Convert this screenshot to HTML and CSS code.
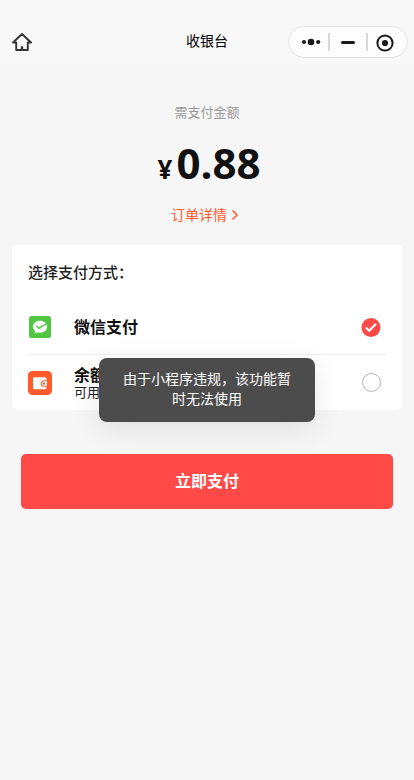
FILE: index.html
```html
<!DOCTYPE html>
<html lang="zh-CN">
<head>
<meta charset="utf-8">
<title>收银台</title>
<link rel="stylesheet" href="styles.css">
</head>
<body>
<header class="navbar">
  <svg class="home" width="20" height="18" viewBox="0 0 20 18"><path d="M1 9.500 10 1l9 8.500h-3.200V17H4.200V9.500Z" fill="none" stroke="#333" stroke-width="1.900" stroke-linejoin="round"/><path d="M10 13.300v3.400" stroke="#333" stroke-width="2.400"/></svg>
  <h1 class="nav-title">收银台</h1>
  <div class="capsule">
    <svg class="dots" width="20" height="8" viewBox="0 0 20 8" fill="#1a1a1a"><circle cx="3" cy="4" r="2.100"/><circle cx="10" cy="4" r="3.300"/><circle cx="17.200" cy="4" r="2.100"/></svg>
    <i class="sep"></i>
    <i class="minus"></i>
    <i class="sep"></i>
    <svg class="target" width="18" height="18" viewBox="0 0 18 18"><circle cx="9" cy="9" r="7.600" fill="none" stroke="#1a1a1a" stroke-width="2"/><circle cx="9" cy="9" r="3.100" fill="#1a1a1a"/></svg>
  </div>
</header>
<main>
  <section class="summary">
    <p class="label">需支付金额</p>
    <p class="amount"><span class="yen">¥</span><span class="num">0.88</span></p>
    <p class="detail">订单详情<svg width="8" height="12" viewBox="0 0 8 12"><path d="M1.500 1.500 6 6l-4.500 4.500" fill="none" stroke="#ff5b2e" stroke-width="1.500"/></svg></p>
  </section>
  <section class="card">
    <h2 class="card-title">选择支付方式：</h2>
    <div class="method wechat">
      <svg class="icon" width="24" height="24" viewBox="0 0 24 24"><rect x="1" y="1" width="22" height="22" rx="2.500" fill="#50c644"/><path d="M12 5.700c4 0 7.100 2.600 7.100 6s-3.100 6-7.100 6c-1 0-1.800-.1-2.600-.4L6.600 18.500l.5-2.600C5.700 14.800 4.900 13.400 4.900 11.700c0-3.400 3.100-6 7.100-6Z" fill="#fff"/><path d="m8.500 10.800 2.200 2.500 8-4.800" fill="none" stroke="#50c644" stroke-width="1.400"/></svg>
      <div class="info"><p class="name">微信支付</p></div>
      <svg class="radio" width="20" height="20" viewBox="0 0 20 20"><circle cx="10" cy="10.500" r="9.500" fill="#ff4a48"/><path d="m4.800 10.400 3.300 3.400 6.900-7" fill="none" stroke="#fff" stroke-width="2.100"/></svg>
    </div>
    <div class="method balance">
      <svg class="icon" width="24" height="24" viewBox="0 0 24 24"><rect width="24" height="24" rx="4.500" fill="#ff5a2b"/><path d="M6.500 6.300H17q1.500 0 1.500 1.500v1.500H16a3.200 3.200 0 0 0 0 6.400h2.500v1.100q0 1.500-1.500 1.500H6.500Q5 18.300 5 16.800v-9Q5 6.300 6.500 6.300Z" fill="#fff"/><path d="M19 10.300v4.400h-3a2.200 2.200 0 0 1 0-4.400Z" fill="#fff"/><circle cx="16" cy="12.500" r="1.200" fill="#ff5a2b"/></svg>
      <div class="info"><p class="name">余额</p><p class="sub">可用</p></div>
      <svg class="radio" width="20" height="20" viewBox="0 0 20 20"><circle cx="10.500" cy="9.500" r="9" fill="#fff" stroke="#b5b5b5"/></svg>
    </div>
  </section>
  <button class="pay">立即支付</button>
</main>
<div class="toast">由于小程序违规，该功能暂<br>时无法使用</div>
</body>
</html>
```

FILE: styles.css
```css
* { box-sizing: border-box; }
body {
  margin: 0;
  height: 780px;
  position: relative;
  background: #f6f6f6;
  color: #111;
  font-family: "Open Sans", "Noto Sans CJK SC", sans-serif;
}
h1, h2, p { margin: 0; }
svg { display: block; flex: none; }

.navbar {
  height: 64px;
  padding: 20px 6px 0 12px;
  display: grid;
  grid-template-columns: 120px 1fr 120px;
  align-items: center;
  background: #f8f8f8;
}
.nav-title {
  margin-top: -2px;
  text-align: center;
  font-size: 14px;
  line-height: 20px;
  font-weight: 400;
  color: #000;
  padding-right: 6px;
}
.capsule {
  width: 120px;
  height: 32px;
  border: 1px solid #e6e6e6;
  border-radius: 16px;
  background: #fdfdfd;
  display: flex;
  align-items: center;
  padding-left: 12px;
}
.sep { width: 2px; height: 18px; background: #d8d8d8; margin-left: 7px; }
.minus { width: 14px; height: 3px; border-radius: 2px; background: #1a1a1a; margin: 0 4px 0 11px; }
.target { margin: 1px 0 0 8px; }

.summary { height: 181px; padding-top: 38px; text-align: center; }
.label { font-size: 13px; line-height: 20px; color: #999; }
.amount {
  height: 58px;
  margin-top: 12px;
  display: flex;
  justify-content: center;
  align-items: baseline;
  font-weight: 700;
  line-height: 58px;
  padding-left: 4px;
}
.yen { font-size: 26px; margin-right: 4px; }
.num { font-size: 42px; }
.detail {
  display: flex;
  justify-content: center;
  align-items: center;
  gap: 4px;
  margin-top: 13px;
  padding-right: 4px;
  font-size: 14px;
  line-height: 20px;
  color: #ff5b2e;
}

.card {
  height: 165px;
  margin: 0 12px;
  padding: 0 16px;
  border-radius: 5px;
  background: #fff;
}
.card-title {
  height: 55px;
  font-size: 15px;
  line-height: 55px;
  font-weight: 500;
  color: #222;
}
.method { height: 55px; display: flex; align-items: center; padding-right: 5px; }
.wechat { border-bottom: 1px solid #f0f0f0; }
.info { flex: 1; margin-left: 22px; }
.name { font-size: 16px; line-height: 18px; font-weight: 700; }
.sub { font-size: 13px; line-height: 16px; color: #222; }

.pay {
  display: block;
  width: 372px;
  height: 55px;
  margin: 44px 0 0 21px;
  padding: 0;
  border: 0;
  border-radius: 5px;
  background: #ff4a48;
  color: #fff;
  font: 700 16px/55px "Open Sans", "Noto Sans CJK SC", sans-serif;
}

.toast {
  position: absolute;
  left: 99px;
  top: 358px;
  width: 216px;
  height: 64px;
  padding-top: 11px;
  border-radius: 8px;
  background: #4c4c4c;
  box-shadow: 0 6px 28px rgba(0, 0, 0, .1);
  color: #fff;
  text-align: center;
  font-size: 14px;
  line-height: 20px;
}
```
